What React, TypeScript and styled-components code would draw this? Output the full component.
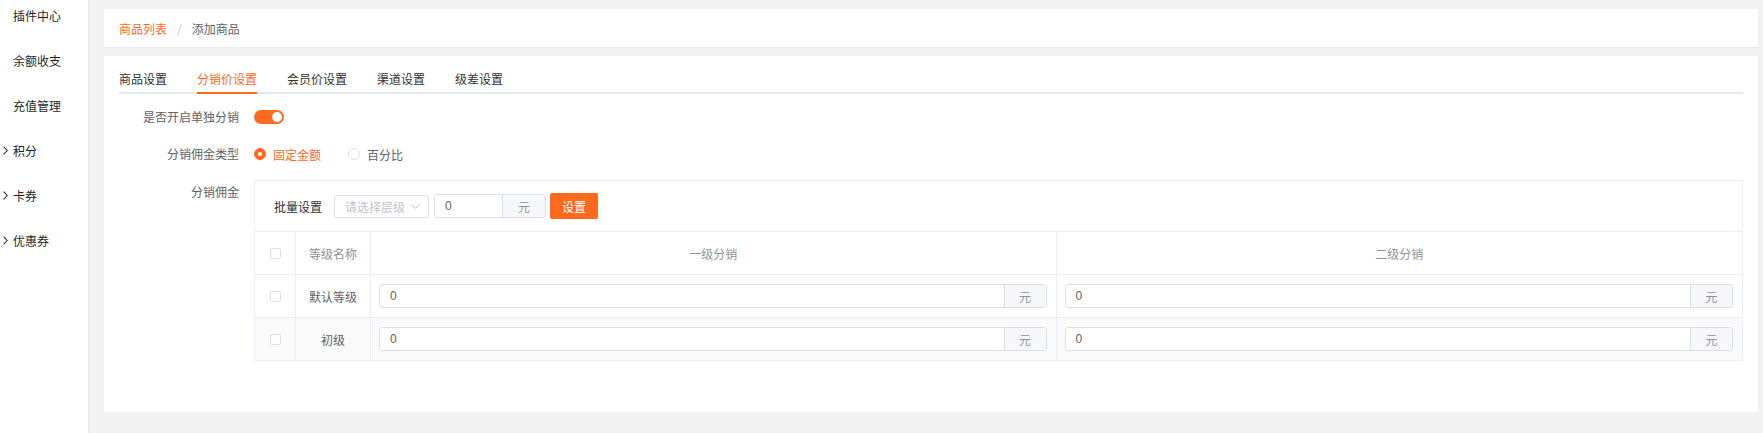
import React from "react";
import styled, { createGlobalStyle } from "styled-components";

const ORANGE = "#ff6a1f";

const GlobalStyle = createGlobalStyle`
  html, body {
    margin: 0;
    padding: 0;
    background: #f2f2f2;
  }
  body {
    font-family: "Noto Sans CJK SC", "Noto Sans", sans-serif;
    font-size: 12px;
    color: #303133;
  }
  * {
    box-sizing: border-box;
  }
`;

const Page = styled.div`
  display: flex;
  min-height: 433px;
`;

const Sidebar = styled.aside`
  width: 89px;
  flex: none;
  background: #fff;
  border-right: 1px solid #e6e6e6;
  overflow: hidden;
`;

const MenuList = styled.ul`
  list-style: none;
  margin: -7px 0 0;
  padding: 0;
`;

const MenuItem = styled.li`
  display: flex;
  align-items: center;
  height: 45px;
  color: #1f1f1f;
  font-size: 12px;
`;

const ArrowSlot = styled.span`
  display: flex;
  align-items: center;
  width: 13px;
  padding-left: 3px;
`;

const Main = styled.main`
  flex: 1;
  padding: 9px 5px 0 15px;
`;

const Breadcrumb = styled.div`
  display: flex;
  align-items: center;
  height: 39px;
  padding: 0 15px;
  background: #fff;
  border-bottom: 1px solid #e6e9f0;
`;

const Crumb = styled.span<{ link?: boolean }>`
  color: ${(p) => (p.link ? ORANGE : "#606266")};
`;

const Separator = styled.span`
  margin: 0 10px;
  color: #c0c4cc;
`;

const Card = styled.section`
  margin-top: 8px;
  background: #fff;
  padding: 10px 15px 51px;
`;

const Tabs = styled.div`
  display: flex;
  gap: 30px;
  border-bottom: 2px solid #e4e7ed;
`;

const Tab = styled.div<{ active?: boolean }>`
  position: relative;
  height: 26px;
  line-height: 26px;
  color: ${(p) => (p.active ? ORANGE : "#303133")};
  &::after {
    content: "";
    position: absolute;
    left: 0;
    right: 0;
    bottom: -2px;
    height: 2px;
    background: ${(p) => (p.active ? ORANGE : "transparent")};
  }
`;

const Form = styled.div`
  margin-top: 11px;
  display: flex;
  flex-direction: column;
  gap: 13px;
`;

const FormRow = styled.div<{ spaced?: boolean }>`
  display: flex;
  align-items: flex-start;
  margin-top: ${(p) => (p.spaced ? "1px" : "0")};
`;

const Label = styled.div`
  width: 135px;
  flex: none;
  padding-right: 15px;
  text-align: right;
  line-height: 24px;
  color: #606266;
`;

const Field = styled.div`
  flex: 1;
  min-width: 0;
  display: flex;
  align-items: center;
  min-height: 24px;
`;

const Switch = styled.span<{ on?: boolean }>`
  display: inline-flex;
  align-items: center;
  justify-content: ${(p) => (p.on ? "flex-end" : "flex-start")};
  width: 30px;
  height: 14px;
  padding: 0 2px;
  border-radius: 7px;
  background: ${(p) => (p.on ? ORANGE : "#dcdfe6")};
  &::after {
    content: "";
    width: 10px;
    height: 10px;
    border-radius: 50%;
    background: #fff;
  }
`;

const RadioOption = styled.label<{ checked?: boolean }>`
  display: inline-flex;
  align-items: center;
  gap: 7px;
  margin-right: 27px;
  color: ${(p) => (p.checked ? ORANGE : "#606266")};
`;

const RadioDot = styled.span<{ checked?: boolean }>`
  display: inline-flex;
  align-items: center;
  justify-content: center;
  width: 12px;
  height: 12px;
  border-radius: 50%;
  border: 1px solid ${(p) => (p.checked ? ORANGE : "#dcdfe6")};
  background: ${(p) => (p.checked ? ORANGE : "#fff")};
  &::after {
    content: "";
    width: 4px;
    height: 4px;
    border-radius: 50%;
    background: ${(p) => (p.checked ? "#fff" : "transparent")};
  }
`;

const CommissionBox = styled.div`
  flex: 1;
  border: 1px solid #ebeef5;
`;

const BatchBar = styled.div`
  display: flex;
  align-items: center;
  height: 51px;
  padding-left: 19px;
  border-bottom: 1px solid #ebeef5;
  color: #303133;
`;

const BatchLabel = styled.span`
  margin-right: 12px;
`;

const Select = styled.div`
  display: flex;
  align-items: center;
  justify-content: space-between;
  width: 95px;
  height: 23px;
  padding: 0 8px 0 10px;
  border: 1px solid #dcdfe6;
  border-radius: 3px;
  color: #c0c4cc;
  margin-right: 5px;
`;

const InputGroup = styled.div<{ width?: string }>`
  display: flex;
  width: ${(p) => p.width || "100%"};
  height: 24px;
  border: 1px solid #dcdfe6;
  border-radius: 3px;
  overflow: hidden;
  background: #fff;
`;

const InputText = styled.div`
  flex: 1;
  display: flex;
  align-items: center;
  padding-left: 10px;
  color: #606266;
  font-family: "Liberation Sans", "Noto Sans CJK SC", sans-serif;
  font-size: 12px;
`;

const Addon = styled.div<{ width: number }>`
  flex: none;
  width: ${(p) => p.width}px;
  display: flex;
  align-items: center;
  justify-content: center;
  background: #f5f7fa;
  border-left: 1px solid #dcdfe6;
  color: #909399;
`;

const Button = styled.button`
  margin-left: 4px;
  width: 48px;
  height: 26px;
  border: none;
  border-radius: 2px;
  background: ${ORANGE};
  color: #fff;
  font-family: inherit;
  font-size: 12px;
  padding: 0;
`;

const Row = styled.div<{ shaded?: boolean; last?: boolean }>`
  display: grid;
  grid-template-columns: 41px 75px 1fr 1fr;
  height: ${(p) => (p.last ? 42 : 43)}px;
  background: ${(p) => (p.shaded ? "#fafafa" : "#fff")};
  border-bottom: ${(p) => (p.last ? "none" : "1px solid #ebeef5")};
`;

const Cell = styled.div<{ head?: boolean; pad?: boolean; end?: boolean }>`
  display: flex;
  align-items: center;
  justify-content: ${(p) => (p.pad ? "stretch" : "center")};
  padding: ${(p) => (p.pad ? "0 9px 0 8px" : "0")};
  border-right: ${(p) => (p.end ? "none" : "1px solid #ebeef5")};
  color: ${(p) => (p.head ? "#909399" : "#606266")};
`;

const Checkbox = styled.span`
  width: 11px;
  height: 11px;
  border: 1px solid #dcdfe6;
  border-radius: 2px;
  background: #fff;
`;

const ChevronRight = () => (
  <svg width="5" height="9" viewBox="0 0 5 9" fill="none">
    <path d="M0.6 0.6 L4.2 4.5 L0.6 8.4" stroke="#2b2f3a" strokeWidth="1.1" />
  </svg>
);

const ChevronDown = () => (
  <svg width="9" height="5" viewBox="0 0 9 5" fill="none">
    <path d="M0.5 0.5 L4.5 4.3 L8.5 0.5" stroke="#c0c4cc" strokeWidth="1" />
  </svg>
);

const menus = [
  { name: "插件中心", arrow: false },
  { name: "余额收支", arrow: false },
  { name: "充值管理", arrow: false },
  { name: "积分", arrow: true },
  { name: "卡券", arrow: true },
  { name: "优惠券", arrow: true },
];

const tabs = ["商品设置", "分销价设置", "会员价设置", "渠道设置", "级差设置"];

const levels = ["默认等级", "初级"];

const PriceInput = () => (
  <InputGroup>
    <InputText>0</InputText>
    <Addon width={42}>元</Addon>
  </InputGroup>
);

const App = () => {
  return (
    <Page>
      <GlobalStyle />
      <Sidebar>
        <MenuList>
          {menus.map((m) => (
            <MenuItem key={m.name}>
              <ArrowSlot>{m.arrow && <ChevronRight />}</ArrowSlot>
              {m.name}
            </MenuItem>
          ))}
        </MenuList>
      </Sidebar>
      <Main>
        <Breadcrumb>
          <Crumb link>商品列表</Crumb>
          <Separator>/</Separator>
          <Crumb>添加商品</Crumb>
        </Breadcrumb>
        <Card>
          <Tabs>
            {tabs.map((t) => (
              <Tab key={t} active={t === "分销价设置"}>
                {t}
              </Tab>
            ))}
          </Tabs>
          <Form>
            <FormRow>
              <Label>是否开启单独分销</Label>
              <Field>
                <Switch on />
              </Field>
            </FormRow>
            <FormRow>
              <Label>分销佣金类型</Label>
              <Field>
                <RadioOption checked>
                  <RadioDot checked />
                  固定金额
                </RadioOption>
                <RadioOption>
                  <RadioDot />
                  百分比
                </RadioOption>
              </Field>
            </FormRow>
            <FormRow spaced>
              <Label>分销佣金</Label>
              <CommissionBox>
                <BatchBar>
                  <BatchLabel>批量设置</BatchLabel>
                  <Select>
                    请选择层级
                    <ChevronDown />
                  </Select>
                  <InputGroup width="112px">
                    <InputText>0</InputText>
                    <Addon width={43}>元</Addon>
                  </InputGroup>
                  <Button>设置</Button>
                </BatchBar>
                <Row>
                  <Cell>
                    <Checkbox />
                  </Cell>
                  <Cell head>等级名称</Cell>
                  <Cell head>一级分销</Cell>
                  <Cell head end>
                    二级分销
                  </Cell>
                </Row>
                {levels.map((lv, i) => (
                  <Row key={lv} shaded={i % 2 === 1} last={i === levels.length - 1}>
                    <Cell>
                      <Checkbox />
                    </Cell>
                    <Cell>{lv}</Cell>
                    <Cell pad>
                      <PriceInput />
                    </Cell>
                    <Cell pad end>
                      <PriceInput />
                    </Cell>
                  </Row>
                ))}
              </CommissionBox>
            </FormRow>
          </Form>
        </Card>
      </Main>
    </Page>
  );
};

export default App;
